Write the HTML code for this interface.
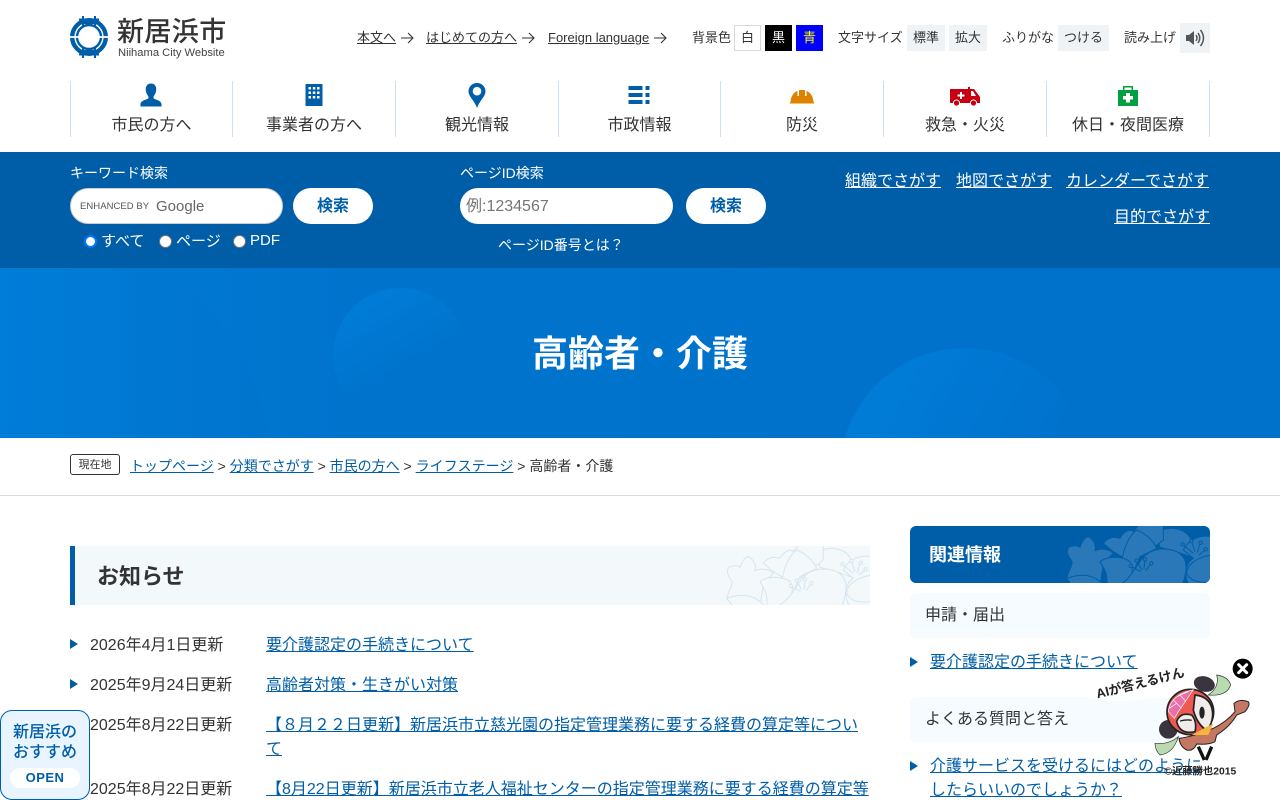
<!DOCTYPE html>
<html lang="ja"><head><meta charset="utf-8"><title>高齢者・介護</title>
<style>
*{box-sizing:border-box}
html,body{margin:0;padding:0;width:1280px;height:800px;overflow:hidden;background:#fff}
body{font-family:"Liberation Sans","Noto Sans CJK JP",sans-serif;color:#333;position:relative}
.a{position:absolute;white-space:nowrap}
a{color:inherit}
.t{font-size:13px;line-height:20px;color:#333}
.b{position:absolute;top:25px;height:26px;line-height:26px;font-size:13px;text-align:center;background:#eff3f6;color:#333}
.nav{position:absolute;top:81px;width:163px;height:56px;border-left:1px solid #cfe0ee;text-align:center;font-size:16px;color:#333}
.nav span{position:absolute;left:0;right:0;top:34px;line-height:22px}
.nav svg{position:absolute;left:50%;top:0;transform:translateX(-50%)}
.lk{color:#005ea8;font-size:16px;line-height:24px;text-decoration:underline}
.d{position:absolute;left:90px;font-size:16px;line-height:24px;color:#333}
.tri{position:absolute;width:0;height:0;border-left:8px solid #005ea8;border-top:5px solid transparent;border-bottom:5px solid transparent}
.w{color:#fff;font-size:16px;line-height:24px;text-decoration:underline}
</style></head><body>

<svg class="a" style="left:70px;top:16px" width="38" height="42" viewBox="0 0 38 42"><circle cx="19" cy="21" r="16.800" fill="none" stroke="#005ea8" stroke-width="4.400"/><circle cx="19" cy="21" r="12" fill="none" stroke="#005ea8" stroke-width="2.400"/><path d="M13 0v11M25 0v11M13 31v11M25 31v11M9 3.500h20M9 38.500h20M9 7h20M9 35h20" stroke="#005ea8" stroke-width="2"/><path d="M0 21h9M29 21h9" stroke="#fff" stroke-width="1.800"/></svg>
<div class="a" style="left:117px;top:13px;font-size:27px;line-height:38px;font-weight:500;color:#333;letter-spacing:.4px">新居浜市</div>
<div class="a" style="left:118px;top:46px;font-size:11.200px;line-height:15px;color:#444">Niihama City Website</div>

<div class="a t" style="left:357px;top:28px"><a href="#">本文へ</a></div>
<svg class="a" style="left:401px;top:32px" width="13" height="12" viewBox="0 0 13 12" fill="none" stroke="#333" stroke-width="1.100"><path d="M0 6h12M7 1l5 5-5 5"/></svg>
<div class="a t" style="left:426px;top:28px"><a href="#">はじめての方へ</a></div>
<svg class="a" style="left:522px;top:32px" width="13" height="12" viewBox="0 0 13 12" fill="none" stroke="#333" stroke-width="1.100"><path d="M0 6h12M7 1l5 5-5 5"/></svg>
<div class="a t" style="left:548px;top:28px"><a href="#">Foreign language</a></div>
<svg class="a" style="left:654px;top:32px" width="13" height="12" viewBox="0 0 13 12" fill="none" stroke="#333" stroke-width="1.100"><path d="M0 6h12M7 1l5 5-5 5"/></svg>
<div class="a t" style="left:692px;top:28px">背景色</div>
<div class="b" style="left:734px;width:27px;background:#fff;border:1px solid #d8d8d8;line-height:24px">白</div>
<div class="b" style="left:765px;width:27px;background:#000;color:#fff">黒</div>
<div class="b" style="left:796px;width:27px;background:#00f;color:#ff0">青</div>
<div class="a t" style="left:838px;top:28px">文字サイズ</div>
<div class="b" style="left:907px;width:38px">標準</div>
<div class="b" style="left:949px;width:38px">拡大</div>
<div class="a t" style="left:1002px;top:28px">ふりがな</div>
<div class="b" style="left:1058px;width:51px">つける</div>
<div class="a t" style="left:1124px;top:28px">読み上げ</div>
<div class="b" style="left:1180px;top:23px;width:30px;height:30px"><svg style="position:absolute;left:5px;top:4px" width="20" height="22" viewBox="0 0 20 22"><path d="M1 8h3l5-4v14l-5-4H1z" fill="#555"/><path d="M11 8q2 3 0 6M13 6q3.500 5 0 10M15.500 3q6 8 0 16" fill="none" stroke="#555" stroke-width="1.500"/></svg></div>

<div class="nav" style="left:70px"><svg width="23" height="24" viewBox="0 0 24 24" style="margin-left:-1px;margin-top:2px"><path d="M12 0c3.500 0 5.500 2.500 5.500 6s-1.700 6-2.800 7.500v2c2 1.500 8.300 2 8.300 6.500v2H1v-2c0-4.500 6.300-5 8.300-6.500v-2C8.200 12 6.500 9.500 6.500 6S8.500 0 12 0z" fill="#005ea8"/></svg><span style="left:-1px">市民の方へ</span></div>
<div class="nav" style="left:232px"><svg width="17" height="22" viewBox="0 0 17 22" style="margin-top:3px"><rect width="17" height="22" fill="#005ea8"/><path d="M3 3h2.500v2.500H3zM7.300 3h2.500v2.500H7.300zM11.500 3H14v2.500h-2.500zM3 7.500h2.500V10H3zM7.300 7.500h2.500V10H7.300zM11.500 7.500H14V10h-2.500zM3 12h2.500v2.500H3zM7.300 12h2.500v2.500H7.300zM11.500 12H14v2.500h-2.500z" fill="#fff"/></svg><span>事業者の方へ</span></div>
<div class="nav" style="left:395px"><svg width="17" height="25" viewBox="0 0 17 25" style="margin-top:2px"><path d="M8.500 0C3.800 0 0 3.700 0 8.300c0 5.300 5.500 8.700 8.500 16.700 3-8 8.500-11.400 8.500-16.700C17 3.700 13.200 0 8.500 0zm0 12.500a4.300 4.300 0 1 1 0-8.600 4.300 4.300 0 0 1 0 8.600z" fill="#005ea8"/></svg><span>観光情報</span></div>
<div class="nav" style="left:558px"><svg width="21" height="18" viewBox="0 0 21 18" style="margin-top:5px;margin-left:-1px"><path d="M0 0h14v4H0zM17 0h4v4h-4zM0 7h14v4H0zM17 7h4v4h-4zM0 14h14v4H0zM17 14h4v4h-4z" fill="#005ea8"/></svg><span style="left:-1px">市政情報</span></div>
<div class="nav" style="left:720px"><svg width="25" height="15" viewBox="0 0 25 15" style="margin-top:8px"><path d="M1 13C1.500 7 4 3.500 8 2V7h1.500V1h6v6H17V2c4 1.500 6.500 5 7 11l1 1.500H0z" fill="#dc8400"/></svg><span>防災</span></div>
<div class="nav" style="left:883px"><svg width="30" height="20" viewBox="0 0 30 20" style="margin-top:5px"><path d="M0 3h18V1h2v2h4l6 8v6h-3a3.500 3.500 0 0 0-7 0H10a3.500 3.500 0 0 0-7 0H0z" fill="#c60012"/><circle cx="6.500" cy="17" r="2.600" fill="#c60012"/><circle cx="23.500" cy="17" r="2.600" fill="#c60012"/><path d="M10 6h2v2.500h2.500v2H12V13h-2v-2.500H7.500v-2H10zM21 5h2l3 5h-5z" fill="#fff"/></svg><span>救急・火災</span></div>
<div class="nav" style="left:1046px;border-right:0"><svg width="20" height="20" viewBox="0 0 20 20" style="margin-top:5px"><path d="M5 4V0h10v4h-1.500V1.500h-7V4z" fill="#00a040"/><rect y="4" width="20" height="16" fill="#00a040"/><path d="M8 7h4v3h3v3.500h-3v3H8v-3H5V10h3z" fill="#fff"/></svg><span>休日・夜間医療</span></div>
<div class="a" style="left:1209px;top:81px;width:1px;height:56px;background:#cfe0ee"></div>

<div class="a" style="left:0;top:152px;width:1280px;height:116px;background:#005ea8"></div>
<div class="a" style="left:70px;top:163px;font-size:14px;line-height:20px;color:#fff">キーワード検索</div>
<div class="a" style="left:70px;top:188px;width:213px;height:36px;background:#fff;border-radius:18px;border:1px solid #ccc"></div>
<div class="a" style="left:80px;top:200px;font-size:9.500px;line-height:14px;color:#555;letter-spacing:.05px">ENHANCED BY</div>
<div class="a" style="left:156px;top:197px;font-size:15px;line-height:20px;color:#666">Google</div>
<div class="a" style="left:293px;top:188px;width:80px;height:36px;background:#fff;border-radius:18px;color:#005ea8;font-weight:700;font-size:16px;line-height:38px;text-align:center">検索</div>
<div class="a" style="left:84px;top:235px;width:13px;height:13px;border-radius:50%;background:#fff;border:2.500px solid #0075ff"></div>
<div class="a" style="left:101px;top:232px;font-size:15px;line-height:20px;color:#fff">すべて</div>
<div class="a" style="left:159px;top:235px;width:13px;height:13px;border-radius:50%;background:#fff;border:1px solid #767676"></div>
<div class="a" style="left:176px;top:232px;font-size:15px;line-height:20px;color:#fff">ページ</div>
<div class="a" style="left:233px;top:235px;width:13px;height:13px;border-radius:50%;background:#fff;border:1px solid #767676"></div>
<div class="a" style="left:250px;top:231px;font-size:15px;line-height:20px;color:#fff">PDF</div>

<div class="a" style="left:460px;top:163px;font-size:14px;line-height:20px;color:#fff">ページID検索</div>
<div class="a" style="left:460px;top:188px;width:213px;height:36px;background:#fff;border-radius:18px;padding-left:6px;font-size:16px;line-height:37px;color:#757575">例:1234567</div>
<div class="a" style="left:686px;top:188px;width:80px;height:36px;background:#fff;border-radius:18px;color:#005ea8;font-weight:700;font-size:16px;line-height:38px;text-align:center">検索</div>
<div class="a" style="left:498px;top:235px;font-size:14px;line-height:20px;color:#fff">ページID番号とは？</div>

<a class="a w" href="#" style="left:845px;top:170px">組織でさがす</a>
<a class="a w" href="#" style="left:956px;top:170px">地図でさがす</a>
<a class="a w" href="#" style="left:1066px;top:170px">カレンダーでさがす</a>
<a class="a w" href="#" style="left:1114px;top:206px">目的でさがす</a>

<div class="a" style="left:0;top:268px;width:1280px;height:170px;overflow:hidden;background:linear-gradient(90deg,#007cd6 0,#0073cc 30%,#0072cc 100%)">
<div class="a" style="left:-243px;top:-46px;width:516px;height:516px;border-radius:50%;background:linear-gradient(90deg,rgba(0,130,225,.25) 40%,rgba(0,114,204,.35))"></div>
<div class="a" style="left:333px;top:20px;width:135px;height:135px;border-radius:50%;background:linear-gradient(150deg,#007fda,#0073cc 60%)"></div>
<div class="a" style="left:840px;top:80px;width:250px;height:250px;border-radius:50%;background:linear-gradient(120deg,#007fda,#0072cc 70%)"></div>
</div>
<div class="a" style="left:0;top:327px;width:1280px;text-align:center;font-size:36px;line-height:54px;font-weight:700;color:#fff">高齢者・介護</div>

<div class="a" style="left:70px;top:454px;width:50px;height:21px;border:1px solid #333;border-radius:3px;font-size:11px;line-height:20px;text-align:center;color:#333">現在地</div>
<div class="a" style="left:130px;top:455px;font-size:14px;line-height:22px;color:#333"><a href="#" style="color:#005ea8">トップページ</a> &gt; <a href="#" style="color:#005ea8">分類でさがす</a> &gt; <a href="#" style="color:#005ea8">市民の方へ</a> &gt; <a href="#" style="color:#005ea8">ライフステージ</a> &gt; 高齢者・介護</div>
<div class="a" style="left:0;top:495px;width:1280px;height:1px;background:#d9d9d9"></div>

<div class="a" style="left:70px;top:546px;width:800px;height:59px;background:#f3f8fb;border-left:5px solid #005ea8;overflow:hidden">
<svg class="a" style="left:565px;top:-6px" width="240" height="70" viewBox="0 0 720 210" fill="#f3f8fb" stroke="#d6e6ef" stroke-width="3"><g transform="translate(-240 0)"><g id="fl"><path d="M770 50C780 20 830 18 860 40C880 60 880 85 870 110L830 95L780 82Z"/><path d="M610 70C625 50 640 50 660 55C670 35 690 25 700 35L720 10H790V60L700 130L640 95Z"/><path d="M500 175C510 140 525 130 510 115C500 100 500 85 510 80C525 75 535 78 540 82C545 65 555 52 565 50C580 58 590 75 585 92C600 85 625 85 640 100L610 130L600 200H520Z"/><path d="M665 130C670 80 690 45 710 30C735 40 760 60 770 85L720 110L690 180Z"/><path d="M600 125C625 105 670 110 690 125C700 140 700 165 680 200H620C625 165 615 150 600 125Z"/><path d="M500 175C540 160 585 160 615 200H520Z"/><path d="M850 90C870 50 910 45 940 50V200H870C850 170 855 130 880 115Z"/><path d="M720 125C745 85 790 80 830 95C870 115 860 160 845 200H650C690 180 700 150 720 125Z"/><path d="M940 105C890 110 860 135 860 160C870 185 900 190 940 185Z"/><path d="M722 155L695 140M725 150L712 125M732 148L735 120M738 152L752 132M880 100L850 75M885 95L875 65M892 98L900 70M897 105L915 90" fill="none"/><circle cx="692" cy="138" r="5"/><circle cx="710" cy="122" r="5"/><circle cx="735" cy="118" r="5"/><circle cx="754" cy="130" r="5"/><circle cx="848" cy="73" r="5"/><circle cx="874" cy="63" r="5"/><circle cx="902" cy="68" r="5"/><circle cx="917" cy="88" r="5"/></g></g></svg>
</div>
<div class="a" style="left:97px;top:559px;font-size:22px;line-height:36px;font-weight:700;color:#333">お知らせ</div>

<div class="tri" style="left:70px;top:639px"></div>
<div class="d" style="top:634px">2026年4月1日更新</div>
<a class="a lk" href="#" style="left:266px;top:634px">要介護認定の手続きについて</a>
<div class="tri" style="left:70px;top:679px"></div>
<div class="d" style="top:674px">2025年9月24日更新</div>
<a class="a lk" href="#" style="left:266px;top:674px">高齢者対策・生きがい対策</a>
<div class="tri" style="left:70px;top:719px"></div>
<div class="d" style="top:714px">2025年8月22日更新</div>
<a class="a lk" href="#" style="left:266px;top:714px">【８月２２日更新】新居浜市立慈光園の指定管理業務に要する経費の算定等につい</a>
<a class="a lk" href="#" style="left:266px;top:738px">て</a>
<div class="tri" style="left:70px;top:783px"></div>
<div class="d" style="top:778px">2025年8月22日更新</div>
<a class="a lk" href="#" style="left:266px;top:778px">【8月22日更新】新居浜市立老人福祉センターの指定管理業務に要する経費の算定等</a>

<div class="a" style="left:910px;top:526px;width:300px;height:57px;background:#005ea8;border-radius:6px;overflow:hidden">
<svg class="a" style="left:-10px;top:-6px" width="320" height="70" viewBox="0 0 960 210" fill="#2a78b8" stroke="#005ea8" stroke-width="3"><use href="#fl"/></svg>
</div>
<div class="a" style="left:929px;top:541px;font-size:18px;line-height:28px;font-weight:700;color:#fff">関連情報</div>
<div class="a" style="left:910px;top:593px;width:300px;height:45px;background:#f5fbfe;border-radius:6px;padding-left:15px;font-size:16px;line-height:45px;color:#333">申請・届出</div>
<div class="tri" style="left:910px;top:657px"></div>
<a class="a lk" href="#" style="left:930px;top:651px">要介護認定の手続きについて</a>
<div class="a" style="left:910px;top:697px;width:300px;height:45px;background:#f5fbfe;border-radius:6px;padding-left:15px;font-size:16px;line-height:45px;color:#333">よくある質問と答え</div>
<div class="tri" style="left:910px;top:761px"></div>
<a class="a lk" href="#" style="left:930px;top:755px">介護サービスを受けるにはどのように</a>
<a class="a lk" href="#" style="left:930px;top:779px">したらいいのでしょうか？</a>

<div class="a" style="left:0;top:710px;width:90px;height:90px;background:#e8f4ff;border:1px solid #005ea8;border-radius:12px"></div>
<div class="a" style="left:0;top:723px;width:90px;text-align:center;font-size:16px;line-height:20px;font-weight:500;color:#005ea8">新居浜の<br>おすすめ</div>
<div class="a" style="left:10px;top:768px;width:70px;height:20px;border-radius:10px;background:#fff;text-align:center;font-size:13px;line-height:20px;font-weight:700;color:#005ea8;letter-spacing:.5px">OPEN</div>

<svg class="a" style="left:1080px;top:640px" width="200" height="160" viewBox="0 0 600 480">
<path d="M0 168L50 178Q120 190 215 175Q240 170 270 176L330 100L300 75L40 125Z" fill="#fff"/>
<text transform="translate(52 175) rotate(-14)" font-family="Liberation Sans,Noto Sans CJK JP,sans-serif" font-size="39" font-weight="700" fill="#222">AIが答えるけん</text>
<circle cx="488" cy="86" r="30" fill="#000"/><path d="M476 74l24 24M500 74l-24 24" stroke="#fff" stroke-width="9" stroke-linecap="round"/>
<path d="M385 165Q440 170 452 135Q445 110 410 105Q420 140 385 165Z" fill="#b8dcb0" stroke="#333" stroke-width="2"/>
<ellipse cx="373" cy="132" rx="32" ry="23" transform="rotate(15 373 132)" fill="#3a3440"/>
<path d="M295 290Q280 340 240 345Q225 330 225 310Q265 315 295 290Z" fill="#b8dcb0" stroke="#333" stroke-width="2"/>
<circle cx="265" cy="268" r="28" fill="#3a3440"/>
<path d="M297 295Q340 290 400 265Q440 245 465 215L462 190Q480 175 505 185Q512 195 495 215L470 225Q450 260 410 285L405 305Q385 315 350 312Q340 335 320 330Q300 320 297 295Z" fill="#c47863" stroke="#222" stroke-width="3"/>
<ellipse cx="331" cy="216" rx="70" ry="68" fill="#ef5a50" stroke="#222" stroke-width="5"/>
<path d="M265 215Q270 165 340 149L295 215L283 235Z" fill="#ea6ea8" stroke="#fff" stroke-width="2"/>
<path d="M280 180L305 205M300 165L318 185M268 205L290 190M290 170L325 155" fill="none" stroke="#fff" stroke-width="2"/>
<path d="M345 165Q395 170 398 220Q398 255 378 270Q350 250 340 210Z" fill="#f0ecea" stroke="#222" stroke-width="5"/>
<ellipse cx="366" cy="218" rx="8" ry="18" fill="#222"/>
<path d="M290 245Q300 215 335 225Q352 245 345 275Q300 285 290 245Z" fill="#f0ecea" stroke="#222" stroke-width="5"/>
<path d="M300 243q20-5 35-2" fill="none" stroke="#222" stroke-width="4"/>
<path d="M335 285L400 250L385 285Z" fill="#f5b53f"/>
<path d="M355 320L373 360M395 320L378 360" stroke="#111" stroke-width="10"/>
<text x="253" y="403" font-family="Liberation Sans,Noto Sans CJK JP,sans-serif" font-size="31" font-weight="700" fill="#222">©近藤勝也2015</text>
</svg>
</body></html>
